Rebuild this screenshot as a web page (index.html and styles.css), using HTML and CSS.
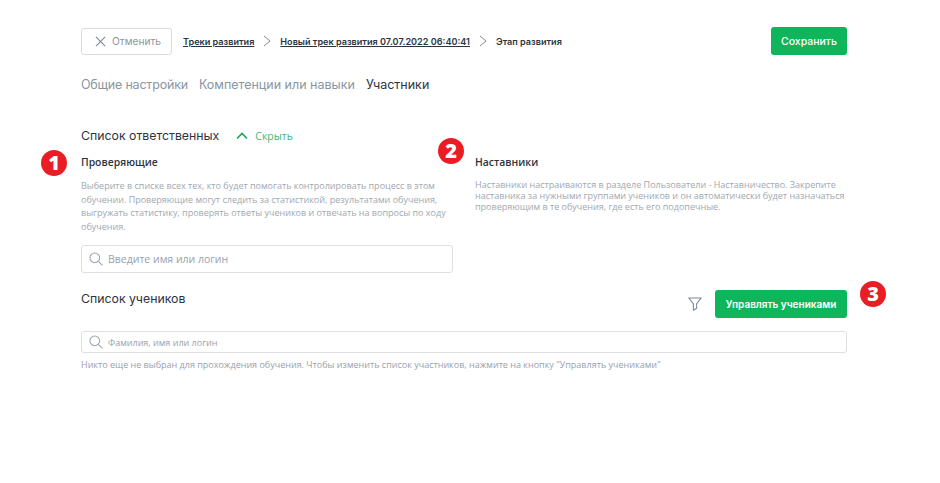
FILE: index.html
```html
<!DOCTYPE html>
<html lang="ru">
<head>
<meta charset="utf-8">
<title>Этап развития</title>
<link rel="stylesheet" href="styles.css">
</head>
<body>
<main class="page">
  <header class="topbar">
    <button class="btn-cancel">
      <svg width="11" height="11" viewBox="0 0 12 12"><path d="M1 1l10 10M11 1L1 11" fill="none" stroke="#7f8a96" stroke-width="1.2"/></svg>
      <span>Отменить</span>
    </button>
    <nav class="crumbs">
      <a class="crumb">Треки развития</a>
      <svg class="chev" width="8" height="12" viewBox="0 0 8 12"><path d="M1 1l6 5-6 5" fill="none" stroke="#7f8a96" stroke-width="1"/></svg>
      <a class="crumb">Новый трек развития 07.07.2022 06:40:41</a>
      <svg class="chev" width="8" height="12" viewBox="0 0 8 12"><path d="M1 1l6 5-6 5" fill="none" stroke="#7f8a96" stroke-width="1"/></svg>
      <span class="crumb-current">Этап развития</span>
    </nav>
    <button class="btn-green btn-save">Сохранить</button>
  </header>

  <div class="tabs">
    <span class="tab tab-first">Общие настройки</span>
    <span class="tab">Компетенции или навыки</span>
    <span class="tab tab-active">Участники</span>
  </div>

  <div class="section-head">
    <h2 class="section-title">Список ответственных</h2>
    <span class="toggle">
      <svg width="12" height="8" viewBox="0 0 12 8"><path d="M1 6.5l5-5 5 5" fill="none" stroke="#13a858" stroke-width="1.6"/></svg>
      Скрыть
    </span>
  </div>

  <div class="columns">
    <section class="col-left">
      <h3 class="sub-title">Проверяющие</h3>
      <p class="desc">Выберите в списке всех тех, кто будет помогать контролировать процесс в этом обучении. Проверяющие могут следить за статистикой, результатами обучения, выгружать статистику, проверять ответы учеников и отвечать на вопросы по ходу обучения.</p>
      <div class="field field-large">
        <svg width="14" height="14" viewBox="0 0 15 15"><circle cx="6.2" cy="6.2" r="5.2" fill="none" stroke="#9aa3ad" stroke-width="1.1"/><path d="M10 10l4.4 4.4" stroke="#9aa3ad" stroke-width="1.1"/></svg>
        <span>Введите имя или логин</span>
      </div>
    </section>
    <section class="col-right">
      <h3 class="sub-title">Наставники</h3>
      <p class="desc desc-tight">Наставники настраиваются в разделе Пользователи - Наставничество. Закрепите наставника за нужными группами учеников и он автоматически будет назначаться проверяющим в те обучения, где есть его подопечные.</p>
    </section>
  </div>

  <div class="students-head">
    <h2 class="section-title">Список учеников</h2>
    <div class="students-actions">
      <svg width="14" height="14" viewBox="0 0 14 14"><path d="M.8 1h12.4L8.6 6.8v4.4l-3.2 2V6.8z" fill="none" stroke="#7f8a96" stroke-width="1.1" stroke-linejoin="round"/></svg>
      <button class="btn-green btn-manage">Управлять учениками</button>
    </div>
  </div>

  <div class="field field-small">
    <svg width="14" height="14" viewBox="0 0 15 15"><circle cx="6.2" cy="6.2" r="5.2" fill="none" stroke="#9aa3ad" stroke-width="1.1"/><path d="M10 10l4.4 4.4" stroke="#9aa3ad" stroke-width="1.1"/></svg>
    <span>Фамилия, имя или логин</span>
  </div>
  <p class="note">Никто еще не выбран для прохождения обучения. Чтобы изменить список участников, нажмите на кнопку "Управлять учениками"</p>
</main>

<span class="badge badge-1">1</span>
<span class="badge badge-2">2</span>
<span class="badge badge-3">3</span>
</body>
</html>
```
FILE: styles.css
```css
* { box-sizing: border-box; }
html, body { margin: 0; background: #fff; }
body { position: relative; width: 940px; height: 483px; overflow: hidden; font-family: "Open Sans", sans-serif; }
.page { width: 766px; margin-left: 81px; padding-top: 27px; }
h2, h3, p { margin: 0; }
button { font: inherit; cursor: pointer; }

.topbar { display: flex; align-items: center; height: 28px; }
.btn-cancel { display: flex; align-items: center; justify-content: center; gap: 6px; width: 91px; height: 27px; padding: 0 0 0 3px; background: #fff; border: 1px solid #d8dde3; border-radius: 3px; font-family: Inter, sans-serif; font-size: 10.2px; color: #8b95a0; }
.crumbs { display: flex; align-items: center; margin-left: 11px; font-family: Inter, sans-serif; font-size: 9.1px; font-weight: 600; color: #2d3440; }
.crumb { text-decoration: underline; }
.chev { margin: 0 9px 0 9px; }
.crumb-current { color: #2d3440; }
.btn-green { background: #0db65a; border: 0; border-radius: 3px; color: #fff; font-family: Inter, sans-serif; height: 28px; }
.btn-save { margin-left: auto; width: 76px; font-size: 10.5px; font-weight: 500; }

.tabs { display: flex; gap: 11px; margin-top: 21px; font-family: Inter, sans-serif; font-size: 12.5px; line-height: 18px; color: #8a95a1; }
.tab-first { letter-spacing: -0.2px; }
.tab-active { color: #2d3440; }

.section-head { display: flex; align-items: center; gap: 17px; margin-top: 33px; height: 18px; }
.section-title { font-family: Inter, sans-serif; font-size: 12.3px; font-weight: 400; line-height: 18px; color: #2d3440; }
.toggle { display: flex; align-items: center; gap: 7px; font-size: 10.5px; color: #3fb878; }

.columns { display: flex; }
.col-left { width: 372px; }
.col-right { width: 372px; margin-left: 22px; }
.sub-title { font-family: "Open Sans", sans-serif; font-size: 10.4px; font-weight: 600; line-height: 14px; color: #2d3440; margin-top: 10px; }
.desc { margin-top: 10px; font-size: 9px; line-height: 13.5px; color: #a0a8b1; }
.desc-tight { margin-top: 11px; line-height: 10.9px; }

.field { display: flex; align-items: center; background: #fff; border: 1px solid #dde1e6; border-radius: 3px; }
.field-large { height: 28px; margin-top: 12px; padding-left: 7px; gap: 5px; font-size: 10.5px; color: #98a1ab; }
.field-small { height: 22px; margin-top: 13px; padding-left: 7px; gap: 5px; font-size: 9px; color: #98a1ab; }

.students-head { display: flex; align-items: center; justify-content: space-between; margin-top: 17px; height: 28px; }
.students-head .section-title { margin-top: -10px; }
.students-actions { display: flex; align-items: center; gap: 13px; }
.btn-manage { width: 132px; font-size: 10px; font-weight: 600; }
.note { margin-top: 6px; font-size: 9px; line-height: 12px; color: #98a1ab; }

.badge { position: absolute; display: flex; align-items: center; justify-content: center; width: 26px; height: 26px; border-radius: 50%; background: #ea1c24; color: #fff; font-family: "Open Sans", sans-serif; font-weight: 800; font-size: 20px; line-height: 1; }
.badge-1 { left: 41px; top: 150px; }
.badge-2 { left: 438px; top: 138px; }
.badge-3 { left: 860px; top: 281px; }
```
